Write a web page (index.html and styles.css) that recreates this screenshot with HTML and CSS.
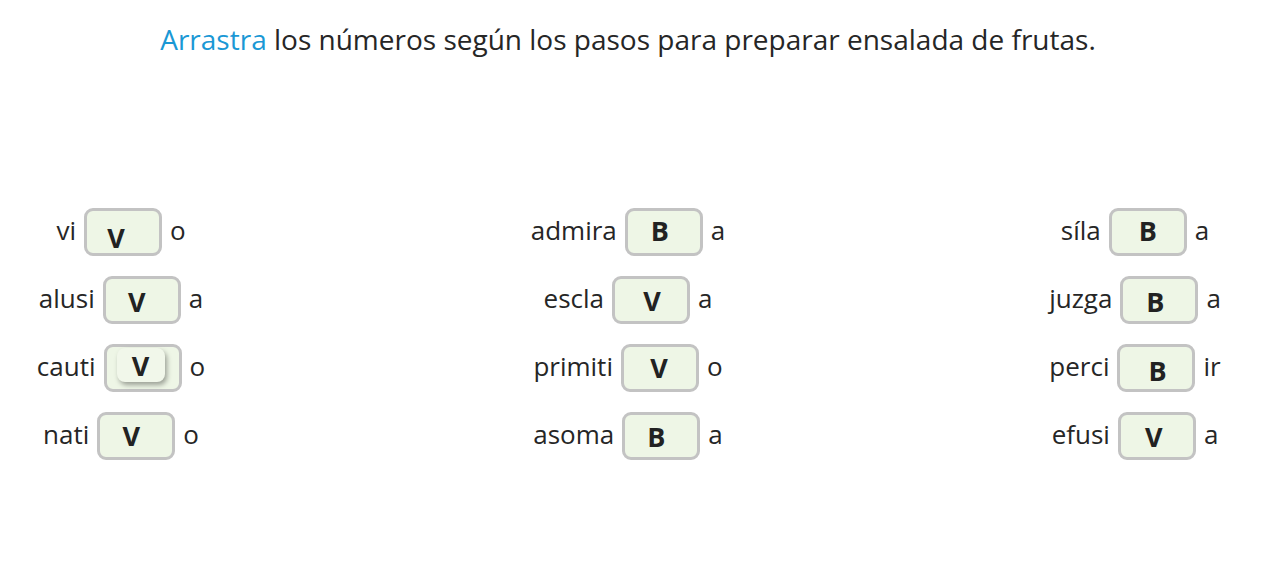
FILE: index.html
```html
<!DOCTYPE html>
<html lang="es">
<head>
<meta charset="utf-8">
<title>Arrastra</title>
<link rel="stylesheet" href="styles.css">
</head>
<body>
<div class="page">
  <p class="title"><span class="hl">Arrastra</span> los números según los pasos para preparar ensalada de frutas.</p>
  <div class="cols">
    <div class="col">
      <div class="row"><span class="w">vi</span><span class="slot"><span class="chip" style="--dx:-7px;--dy:5px">V</span></span><span class="w">o</span></div>
      <div class="row"><span class="w">alusi</span><span class="slot"><span class="chip" style="--dx:-5px;--dy:1px">V</span></span><span class="w">a</span></div>
      <div class="row"><span class="w">cauti</span><span class="slot"><span class="chip drag" style="--dx:-2px;--dy:-3px">V</span></span><span class="w">o</span></div>
      <div class="row"><span class="w">nati</span><span class="slot"><span class="chip" style="--dx:-5px;--dy:-1px">V</span></span><span class="w">o</span></div>
    </div>
    <div class="col">
      <div class="row"><span class="w">admira</span><span class="slot"><span class="chip" style="--dx:-4px;--dy:-2px">B</span></span><span class="w">a</span></div>
      <div class="row"><span class="w">escla</span><span class="slot"><span class="chip" style="--dx:1px;--dy:0px">V</span></span><span class="w">a</span></div>
      <div class="row"><span class="w">primiti</span><span class="slot"><span class="chip" style="--dx:-1px;--dy:-1px">V</span></span><span class="w">o</span></div>
      <div class="row"><span class="w">asoma</span><span class="slot"><span class="chip" style="--dx:-5px;--dy:0px">B</span></span><span class="w">a</span></div>
    </div>
    <div class="col">
      <div class="row"><span class="w">síla</span><span class="slot"><span class="chip" style="--dx:0px;--dy:-2px">B</span></span><span class="w">a</span></div>
      <div class="row"><span class="w">juzga</span><span class="slot"><span class="chip" style="--dx:-4px;--dy:1px">B</span></span><span class="w">a</span></div>
      <div class="row"><span class="w">perci</span><span class="slot"><span class="chip" style="--dx:1px;--dy:2px">B</span></span><span class="w">ir</span></div>
      <div class="row"><span class="w">efusi</span><span class="slot"><span class="chip" style="--dx:-3px;--dy:0px">V</span></span><span class="w">a</span></div>
    </div>
  </div>
</div>
</body>
</html>
```

FILE: styles.css
```css
html, body {
  margin: 0;
  padding: 0;
  background: #ffffff;
}
body {
  font-family: "Open Sans", "Noto Sans", "Liberation Sans", sans-serif;
  color: #262626;
}
.page {
  width: 1240px;
  padding-left: 8px;
}
.title {
  margin: 0;
  padding-top: 20px;
  font-size: 28px;
  line-height: 38px;
  text-align: center;
  color: #262626;
}
.hl {
  color: #1a98d5;
}
.cols {
  margin-top: 150px;
  display: flex;
  justify-content: space-between;
}
.col {
  width: 226px;
  display: flex;
  flex-direction: column;
  gap: 20px;
}
.row {
  height: 48px;
  display: flex;
  align-items: center;
  justify-content: center;
  gap: 8px;
}
.w {
  font-size: 26px;
  line-height: 36px;
  padding-bottom: 4px;
  white-space: nowrap;
}
.slot {
  box-sizing: border-box;
  width: 78px;
  height: 48px;
  border: 3px solid #c3c3c3;
  border-radius: 9px;
  background: #eef6e6;
  display: flex;
  align-items: center;
  justify-content: center;
}
.chip {
  width: 48px;
  height: 34px;
  border-radius: 8px;
  display: flex;
  align-items: center;
  justify-content: center;
  font-size: 27px;
  font-weight: 700;
  color: #222222;
  transform: translate(var(--dx), var(--dy));
}
.chip.drag {
  background: #f1f7ea;
  box-shadow: 2px 3px 5px rgba(0, 0, 0, 0.35);
}
```
